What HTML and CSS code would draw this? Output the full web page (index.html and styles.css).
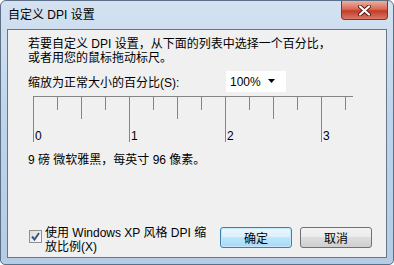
FILE: index.html
```html
<!DOCTYPE html>
<html lang="zh-CN">
<head>
    <meta charset="UTF-8">
    <title>自定义 DPI 设置</title>
    <link rel="stylesheet" href="styles.css">
</head>
<body>

    <div class="window">
        <div class="titlebar">
            <span class="title">自定义 DPI 设置</span>
            <button class="close" title="关闭">
                <svg width="13" height="11" viewBox="0 0 13 11">
                    <path d="M2 1.5 L11 9.5 M11 1.5 L2 9.5" stroke="#5a1a12" stroke-width="4" stroke-linecap="round"/>
                    <path d="M2 1.5 L11 9.5 M11 1.5 L2 9.5" stroke="#fff" stroke-width="2.2" stroke-linecap="round"/>
                </svg>
            </button>
        </div>

        <div class="client">
            <p class="intro">若要自定义 DPI 设置，从下面的列表中选择一个百分比，<br>或者用您的鼠标拖动标尺。</p>

            <!-- Choix du pourcentage -->
            <div class="scale-row">
                <label class="scale-label">缩放为正常大小的百分比(S):</label>
                <div class="select">
                    <span>100%</span>
                    <svg width="8" height="5" viewBox="0 0 8 5"><path d="M0 0 H7 L3.5 4 Z" fill="#000"/></svg>
                </div>
            </div>

            <!-- Regle : 96 px par pouce -->
            <svg class="ruler" width="322" height="50" viewBox="0 0 322 50">
                <g stroke="#858585" stroke-width="1">
                    <path d="M0 0.5 H320"/>
                    <path d="M0.5 0 V46 M96.5 0 V46 M192.5 0 V46 M288.5 0 V46"/>
                    <path d="M48.5 0 V23 M144.5 0 V23 M240.5 0 V23"/>
                    <path d="M24.5 0 V14 M72.5 0 V14 M120.5 0 V14 M168.5 0 V14 M216.5 0 V14 M264.5 0 V14 M312.5 0 V14"/>
                </g>
                <g class="ruler-labels">
                    <text x="2" y="44">0</text>
                    <text x="98" y="44">1</text>
                    <text x="194" y="44">2</text>
                    <text x="290" y="44">3</text>
                </g>
            </svg>

            <p class="font-info">9 磅 微软雅黑，每英寸 96 像素。</p>

            <div class="footer">
                <label class="xp-check">
                    <span class="checkbox">
                        <svg width="9" height="9" viewBox="0 0 9 9"><path d="M1 4.5 L3.5 7.5 L8 1" fill="none" stroke="#3f5680" stroke-width="2"/></svg>
                    </span>
                    <span>使用 Windows XP 风格 DPI 缩<br>放比例(X)</span>
                </label>
                <button class="btn btn-default">确定</button>
                <button class="btn">取消</button>
            </div>
        </div>
    </div>

</body>
</html>
```

FILE: styles.css
```css
* { box-sizing: border-box; }
body { margin: 0; font-family: "Liberation Sans", "Noto Sans CJK SC", sans-serif; font-size: 12px; color: #000; }

.window { width: 394px; height: 265px; border: 1px solid #5b6f86; border-radius: 6px 6px 5px 5px; background: linear-gradient(#d4e2f1, #bfd4ea 45%, #b5cce5); display: flex; flex-direction: column; overflow: hidden; }
.titlebar { height: 28px; display: flex; align-items: flex-start; }
.title { padding: 6px 0 0 7px; line-height: 16px; }
.close { margin-left: auto; margin-right: 5px; width: 47px; height: 19px; padding: 0; border: 1px solid #80342a; border-top: none; border-radius: 0 0 4px 4px; background: linear-gradient(#eab0a2, #d96a57 45%, #c33c27 55%, #d87a66); display: flex; align-items: center; justify-content: center; }

.client { flex: 1; margin: 0 6px 6px; border: 1px solid #66778a; background: #f0f0f0; padding: 7px 0 3px 20px; display: flex; flex-direction: column; }
.intro { margin: 0; line-height: 14px; }

.scale-row { display: flex; align-items: center; height: 21px; margin-top: 6px; }
.scale-label { width: 198px; }
.select { width: 60px; height: 21px; background: #fff; display: flex; align-items: center; padding: 0 10px 0 4px; justify-content: space-between; }

.ruler { display: block; margin: 4px 0 0 5px; }
.ruler-labels { font-family: "Liberation Sans", sans-serif; font-size: 12px; fill: #000; }

.font-info { margin: 6px 0 0; line-height: 16px; }

.footer { margin-top: auto; display: flex; align-items: flex-start; }
.xp-check { width: 191px; margin-left: 1px; display: flex; align-items: flex-start; gap: 3px; line-height: 14px; }
.checkbox { width: 13px; height: 13px; margin-top: 4px; border: 1px solid #8e8f8f; background: linear-gradient(135deg, #dcdcdc, #fbfbfb); display: flex; align-items: center; justify-content: center; }
.btn { width: 72px; height: 21px; margin-top: 1px; margin-right: 8px; padding: 0; border: 1px solid #707070; border-radius: 3px; font: inherit; color: #000; background: linear-gradient(#f2f2f2, #ebebeb 50%, #dddddd 50%, #cfcfcf); }
.btn-default { border-color: #3c7fb1; background: linear-gradient(#eaf6fd, #d9f0fc 50%, #bee6fd 50%, #a7d9f5); box-shadow: inset 0 0 0 1px #c5e7fb; }
```
